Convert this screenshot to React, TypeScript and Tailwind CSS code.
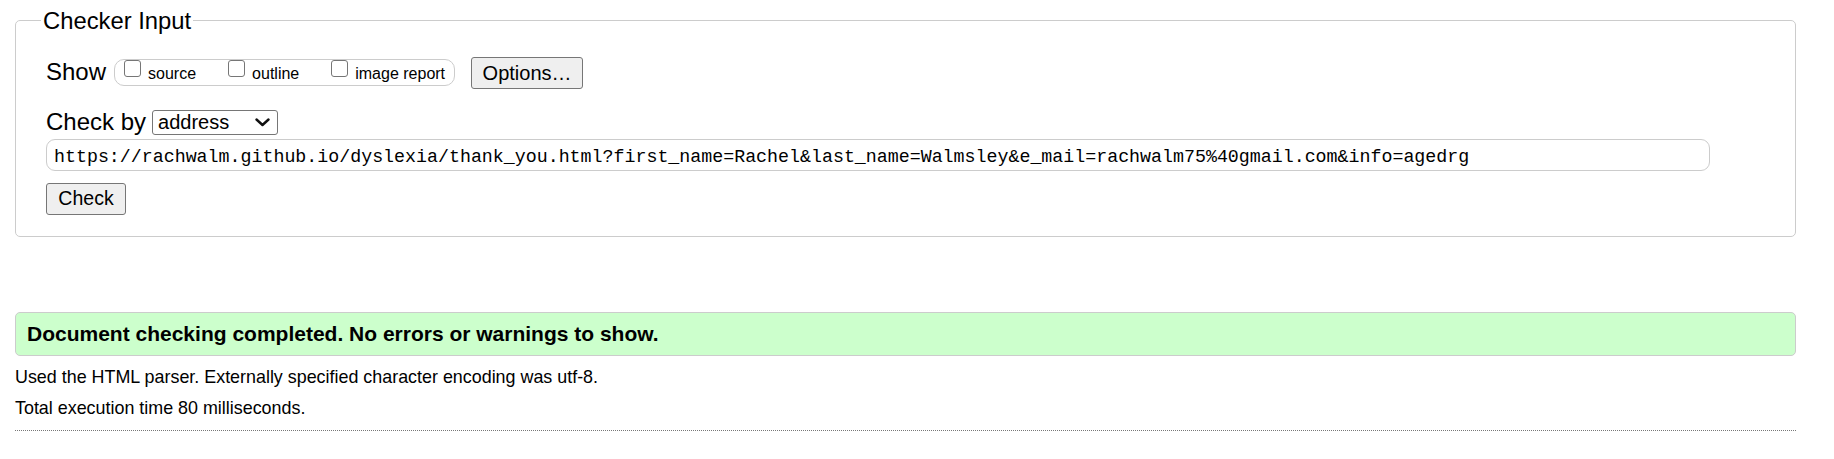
import React from "react";

const url =
  "https://rachwalm.github.io/dyslexia/thank_you.html?first_name=Rachel&last_name=Walmsley&e_mail=rachwalm75%40gmail.com&info=agedrg";

function CheckOption({ label }: { label: string }) {
  return (
    <label className="flex items-start">
      <span className="w-[17px] h-[17px] border border-[#767676] rounded-[3px] bg-white" />
      <span className="ml-[7px] mt-[4.5px] text-[16px] leading-[18px]">{label}</span>
    </label>
  );
}

function Button({ children, className }: { children: React.ReactNode; className: string }) {
  return (
    <button
      type="button"
      className={`h-[32px] border border-[#767676] rounded-[3px] bg-[#efefef] flex items-center justify-center pb-[1px] ${className}`}
    >
      {children}
    </button>
  );
}

export default function App() {
  return (
    <div className="w-[1834px] h-[459px] overflow-hidden bg-white text-black font-['Liberation_Sans',Arial,sans-serif]">
      <fieldset className="ml-[15px] mr-[38px] mt-[6.5px] border border-[#ccc] rounded-[5px] px-[25px] pb-[21px]">
        <legend className="px-[2px] text-[23.8px] leading-[27px]">Checker Input</legend>
        <div className="pl-[5px]">
          {/* show options */}
          <div className="mt-[23.5px] flex items-start h-[32px]">
            <span className="mt-[0.5px] text-[24px] leading-[27px]">Show</span>
            <div className="ml-[8px] mt-[2px] h-[27px] border border-[#ccc] rounded-[10px] flex items-start gap-[32px] pl-[9px] pr-[9px]">
              <CheckOption label="source" />
              <CheckOption label="outline" />
              <CheckOption label="image report" />
            </div>
            <Button className="ml-[16px] w-[112px] text-[20px]">Options…</Button>
          </div>

          {/* check by */}
          <div className="mt-[19px] flex items-start">
            <span className="text-[24px] leading-[27px]">Check by</span>
            <div className="ml-[6px] mt-[2px] w-[126px] h-[25px] border border-[#767676] rounded-[3px] flex items-center justify-between pl-[5px] pr-[7px]">
              <span className="text-[20px] leading-[23px]">address</span>
              <svg width="15" height="9" viewBox="0 0 15 9" fill="none">
                <path d="M1.5 1.5 L7.5 7 L13.5 1.5" stroke="#111" strokeWidth="2.4" strokeLinecap="round" strokeLinejoin="round" />
              </svg>
            </div>
          </div>

          <div className="mt-[4px] w-[1664px] h-[32px] border border-[#ccc] rounded-[9px] pl-[7px] pt-[7px] whitespace-nowrap overflow-hidden font-['Liberation_Mono','DejaVu_Sans_Mono',monospace] text-[18.3px] leading-[21px]">
            {url}
          </div>

          <Button className="mt-[12px] w-[80px] text-[19.5px]">Check</Button>
        </div>
      </fieldset>

      <div className="ml-[15px] mr-[38px] mt-[75px] h-[44px] border border-[#ccc] rounded-[5px] bg-[#ccffcc] flex items-center pl-[11px]">
        <span className="text-[21px] font-bold leading-[24px]">
          Document checking completed. No errors or warnings to show.
        </span>
      </div>

      <p className="ml-[15px] mt-[10.5px] text-[17.9px] leading-[20px]">
        Used the HTML parser. Externally specified character encoding was utf-8.
      </p>
      <p className="ml-[15px] mt-[11.5px] text-[17.9px] leading-[20px]">
        Total execution time 80 milliseconds.
      </p>
      <div className="ml-[15px] mr-[38px] mt-[12px] border-t border-dotted border-[#777]" />
    </div>
  );
}
